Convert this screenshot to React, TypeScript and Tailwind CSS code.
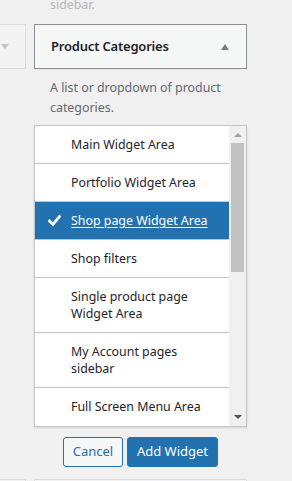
import React from "react";

const items: { label: string; selected?: boolean }[] = [
  { label: "Main Widget Area" },
  { label: "Portfolio Widget Area" },
  { label: "Shop page Widget Area", selected: true },
  { label: "Shop filters" },
  { label: "Single product page Widget Area" },
  { label: "My Account pages sidebar" },
  { label: "Full Screen Menu Area" },
];

export default function App() {
  return (
    <div
      className="w-[292px] h-[481px] overflow-hidden bg-[#f0f0f1] text-[#1d2327]"
      style={{ fontFamily: '"Noto Sans", "Open Sans", sans-serif' }}
    >
      <div className="h-[24px] overflow-hidden pl-[50px]">
        <div className="mt-[-5px] text-[12.4px] leading-[19.5px] text-[#b4b6b9]">sidebar.</div>
      </div>
      <div className="flex gap-[8px]">
        {/* left partial column */}
        <div className="w-[26px] shrink-0">
          <div className="h-[45px] border-y border-r border-[#dcdcde] bg-[#f3f3f4] flex items-center">
            <svg width="8" height="5" viewBox="0 0 8 5" className="ml-[1px]">
              <path d="M0 0 L8 0 L4 5 Z" fill="#c3c4c7" />
            </svg>
          </div>
        </div>
        {/* main column */}
        <div className="w-[213px] shrink-0">
          <div className="h-[45px] border border-[#8c8f94] bg-[#f6f7f7] flex items-center justify-between pl-[16px] pr-[17px] shadow-[0_1px_1px_rgba(0,0,0,0.04)]">
            <span className="text-[13px] font-semibold tracking-[-0.2px] text-[#1d2327]">Product Categories</span>
            <svg width="8" height="6" viewBox="0 0 8 6">
              <path d="M0 6 L8 6 L4 0 Z" fill="#787c82" />
            </svg>
          </div>
          <div className="pl-[16px] pr-[10px] pt-[9px] text-[12.4px] leading-[19.5px] text-[#646970]">
            A list or dropdown of product categories.
          </div>
          <div className="mt-[8px] h-[302px] border border-[#c3c4c7] bg-white flex shadow-[0_1px_2px_rgba(0,0,0,0.12)]">
            <div className="flex-1 overflow-hidden">
              {items.map((it, i) => (
                <div
                  key={it.label}
                  className={
                    "flex items-start pr-[12px] py-[10px] text-[12.4px] leading-[17px] " +
                    (i < items.length - 1 ? "border-b border-[#c3c4c7] " : "") +
                    (it.selected ? "bg-[#2271b1] text-white" : "text-[#1d2327]")
                  }
                >
                  <div className="w-[36px] shrink-0 flex justify-end pr-[10px] pt-[2px]">
                    {it.selected && (
                      <svg width="13" height="13" viewBox="0 0 13 13">
                        <path d="M1.5 7 L5 10.5 L11.5 2.5" fill="none" stroke="#ffffff" strokeWidth="2.8" strokeLinecap="square" />
                      </svg>
                    )}
                  </div>
                  <span className={it.selected ? "underline underline-offset-2" : ""}>{it.label}</span>
                </div>
              ))}
            </div>
            <div className="w-[17px] shrink-0 bg-[#f0f0f0] flex flex-col items-center">
              <svg width="8" height="4" viewBox="0 0 8 4" className="mt-[7px]">
                <path d="M0 4 L8 4 L4 0 Z" fill="#a3a3a3" />
              </svg>
              <div className="mt-[6px] w-[13px] h-[129px] bg-[#c1c1c1]" />
              <div className="flex-1" />
              <svg width="8" height="4" viewBox="0 0 8 4" className="mb-[7px]">
                <path d="M0 0 L8 0 L4 4 Z" fill="#505050" />
              </svg>
            </div>
          </div>
          <div className="mt-[10px] flex justify-center gap-[4px]">
            <button className="h-[30px] w-[60px] rounded-[3px] border border-[#2271b1] bg-[#f6f7f7] text-[#2271b1] text-[13px]">
              Cancel
            </button>
            <button className="h-[30px] w-[91px] rounded-[3px] border border-[#2271b1] bg-[#2271b1] text-white text-[13px]">
              Add Widget
            </button>
          </div>
        </div>
      </div>
      <div className="mt-[12px] flex gap-[8px]">
        <div className="w-[26px] h-[10px] border-t border-r border-[#dcdcde] bg-[#f3f3f4]" />
        <div className="w-[213px] h-[10px] border-t border-x border-[#dcdcde] bg-[#f3f3f4]" />
      </div>
    </div>
  );
}
